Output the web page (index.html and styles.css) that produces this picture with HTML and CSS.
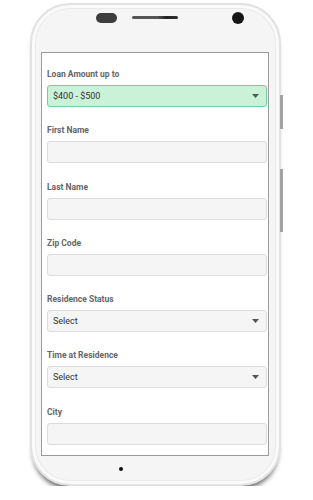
FILE: index.html
```html
<!DOCTYPE html>
<html lang="en">
<head>
  <meta charset="UTF-8" />
  <meta name="viewport" content="width=device-width, initial-scale=1.0"/>
  <title>Loan Application</title>
  <link rel="stylesheet" href="styles.css">
</head>
<body>

  <div class="phone">
    <span class="side-btn btn-top"></span>
    <span class="side-btn btn-bottom"></span>

    <div class="phone-top">
      <span class="sensor"></span>
      <span class="speaker"></span>
      <span class="cam"></span>
    </div>

    <div class="screen">
      <form class="loan-form">
        <div class="field">
          <label>Loan Amount up to</label>
          <div class="select picked">
            <select>
              <option>$400 - $500</option>
            </select>
            <svg class="arrow" width="7" height="4" viewBox="0 0 7 4"><path d="M0 0h7L3.5 4z"/></svg>
          </div>
        </div>

        <div class="field">
          <label>First Name</label>
          <input type="text">
        </div>

        <div class="field">
          <label>Last Name</label>
          <input type="text">
        </div>

        <div class="field">
          <label>Zip Code</label>
          <input type="text">
        </div>

        <div class="field">
          <label>Residence Status</label>
          <div class="select">
            <select>
              <option>Select</option>
            </select>
            <svg class="arrow" width="7" height="4" viewBox="0 0 7 4"><path d="M0 0h7L3.5 4z"/></svg>
          </div>
        </div>

        <div class="field">
          <label>Time at Residence</label>
          <div class="select">
            <select>
              <option>Select</option>
            </select>
            <svg class="arrow" width="7" height="4" viewBox="0 0 7 4"><path d="M0 0h7L3.5 4z"/></svg>
          </div>
        </div>

        <div class="field">
          <label>City</label>
          <input type="text">
        </div>
      </form>
    </div>

    <div class="phone-bottom">
      <span class="home-dot"></span>
    </div>
  </div>

</body>
</html>
```

FILE: styles.css
```css
* { margin: 0; padding: 0; box-sizing: border-box; }

body {
  font-family: Roboto, 'Liberation Sans', Arial, sans-serif;
  background: #fff;
  overflow: hidden;
}

/* phone body */
.phone {
  position: relative;
  margin: 3px 0 0 30px;
  width: 251px;
  height: 483px;
  border: 2px solid #e2e2e2;
  border-radius: 40px;
  background: #f5f5f5;
  box-shadow: inset 0 0 0 3px #fafafa, inset 0 0 0 4px #eaeaea, 0 6px 5px -3px rgba(0,0,0,0.6);
  display: flex;
  flex-direction: column;
}

.side-btn {
  position: absolute;
  right: -4px;
  width: 3px;
  background: #a2a2a2;
}
.btn-top { top: 90px; height: 34px; }
.btn-bottom { top: 164px; height: 63px; }

.phone-top {
  height: 47px;
  padding: 7px 0 0 64px;
  display: flex;
  align-items: flex-start;
}

.phone-top > span { display: block; }

.sensor {
  width: 21px;
  height: 10px;
  margin-top: 1px;
  border-radius: 5px;
  background: #3d3d3d;
}

.speaker {
  width: 46px;
  height: 3px;
  margin: 4px 0 0 15px;
  border-radius: 2px;
  background: linear-gradient(to right, #555 0%, #555 55%, #222 75%, #333 100%);
}

.cam {
  width: 12px;
  height: 12px;
  margin-left: 54px;
  border-radius: 50%;
  background: #161616;
}

/* screen */
.screen {
  margin-left: 9px;
  width: 228px;
  height: 404px;
  border: 1px solid #9b9b9b;
  background: #fff;
  overflow: hidden;
}

.loan-form { padding: 15px 1px 0 5px; }

.field { margin-bottom: 17.3px; }

.field label {
  display: block;
  height: 12px;
  line-height: 12px;
  margin-bottom: 5px;
  font-size: 8.5px;
  font-weight: bold;
  color: #666;
}

.field input,
.field select {
  display: block;
  width: 100%;
  height: 22px;
  border: 1px solid #dcdcdc;
  border-radius: 3px;
  background: #f5f5f5;
  font-family: inherit;
  font-size: 9px;
  font-weight: normal;
  color: #333;
  padding: 0 5px;
  outline: none;
  -webkit-appearance: none;
  appearance: none;
}

.select { position: relative; }

.select .arrow {
  position: absolute;
  right: 8px;
  top: 9px;
  fill: #555;
}

.select.picked select {
  background: #c9f2d9;
  border-color: #6fcf9e;
}

.phone-bottom {
  flex: 1;
  padding: 11px 0 0 87px;
}

.home-dot {
  display: block;
  width: 4px;
  height: 4px;
  border-radius: 50%;
  background: #111;
}
```
